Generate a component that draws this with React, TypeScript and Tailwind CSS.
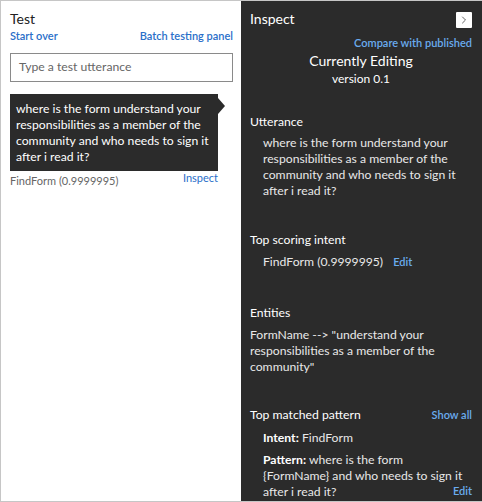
import { ChevronRight } from 'lucide-react';

const font = { fontFamily: 'Lato, "Noto Sans", sans-serif' };

function Lines({ lines }: { lines: string[] }) {
  return (
    <>
      {lines.map((l, i) => (
        <span key={i} className="block whitespace-nowrap">
          {l}
        </span>
      ))}
    </>
  );
}

const utterance = [
  'where is the form understand your',
  'responsibilities as a member of the',
  'community and who needs to sign it',
  'after i read it?',
];

export default function App() {
  return (
    <div
      className="flex w-[482px] h-[502px] border-t border-l border-b border-[#c6c6c6] bg-white overflow-hidden"
      style={font}
    >
      {/* Left: test panel */}
      <div className="w-[240px] shrink-0 flex flex-col pl-[9px] pr-[8px] pt-[8px]">
        <div className="text-[14px] leading-[20px] text-[#222]">Test</div>
        <div className="flex justify-between text-[11px] leading-[14px] font-semibold text-[#2a6fc9]">
          <span>Start over</span>
          <span>Batch testing panel</span>
        </div>
        <div className="mt-[10px] h-[29px] border border-[#8a8a8a] flex items-center px-[8px] text-[12.2px] text-[#666]">
          Type a test utterance
        </div>

        <div className="relative mt-[12px] w-[208px] bg-[#2b2b2b] text-white text-[12.2px] leading-[16px] px-[6px] pt-[7px] pb-[6px]">
          <Lines lines={utterance} />
          <span className="absolute right-[-7px] top-[4px] w-0 h-0 border-y-[8px] border-y-transparent border-l-[7px] border-l-[#2b2b2b]" />
        </div>
        <div className="w-[208px] flex justify-between items-start text-[11px] leading-[14px]">
          <span className="mt-[3px] text-[#666]">FindForm (0.9999995)</span>
          <span className="text-[#2a6fc9]">Inspect</span>
        </div>
      </div>

      {/* Right: inspect panel */}
      <div className="flex-1 min-w-0 bg-[#2b2b2b] text-[#f0f0f0] flex flex-col pl-[9px] pr-[10px] pt-[8px]">
        <div className="flex justify-between items-start">
          <span className="text-[14px] leading-[20px] text-white">Inspect</span>
          <span className="mt-[3px] w-[16px] h-[16px] bg-white rounded-[1px] flex items-center justify-center">
            <ChevronRight size={12} strokeWidth={1.5} color="#333" />
          </span>
        </div>
        <div className="text-right text-[11px] leading-[14px] font-semibold text-[#6aacef] mt-[7px]">
          Compare with published
        </div>
        <div className="text-center text-[14px] leading-[20px] text-white mt-[1px]">Currently Editing</div>
        <div className="text-center text-[12px] leading-[16px] text-white">version 0.1</div>

        <div className="mt-[26px] text-[12.2px] leading-[17px] text-white">Utterance</div>
        <div className="mt-[5px] pl-[13px] text-[12.2px] leading-[16px] text-[#e8e8e8]">
          <Lines lines={utterance} />
        </div>

        <div className="mt-[32px] text-[12.2px] leading-[17px] text-white">Top scoring intent</div>
        <div className="mt-[5px] pl-[13px] text-[12.2px] leading-[17px] text-[#e8e8e8] flex items-baseline">
          <span>FindForm (0.9999995)</span>
          <span className="ml-[10px] text-[11px] font-semibold text-[#6aacef]">Edit</span>
        </div>

        <div className="mt-[34px] text-[12.2px] leading-[17px] text-white">Entities</div>
        <div className="mt-[6px] text-[12.2px] leading-[16px] text-[#e8e8e8]">
          <Lines
            lines={[
              'FormName --> "understand your',
              'responsibilities as a member of the',
              'community"',
            ]}
          />
        </div>

        <div className="mt-[31px] flex justify-between items-baseline">
          <span className="text-[12.2px] leading-[17px] text-white">Top matched pattern</span>
          <span className="text-[11px] font-semibold text-[#6aacef]">Show all</span>
        </div>
        <div className="mt-[5px] pl-[13px] text-[12.2px] leading-[17px] text-[#e8e8e8]">
          <span className="font-bold text-white">Intent:</span> FindForm
        </div>
        <div className="mt-[6px] pl-[13px] text-[12.2px] leading-[16px] text-[#e8e8e8] relative">
          <span className="block whitespace-nowrap">
            <span className="font-bold text-white">Pattern:</span> where is the form
          </span>
          <span className="block whitespace-nowrap">{'{FormName} and who needs to sign it'}</span>
          <span className="block whitespace-nowrap">after i read it?</span>
          <span className="absolute right-0 bottom-[1px] text-[11px] font-semibold text-[#6aacef]">Edit</span>
        </div>
      </div>
    </div>
  );
}
